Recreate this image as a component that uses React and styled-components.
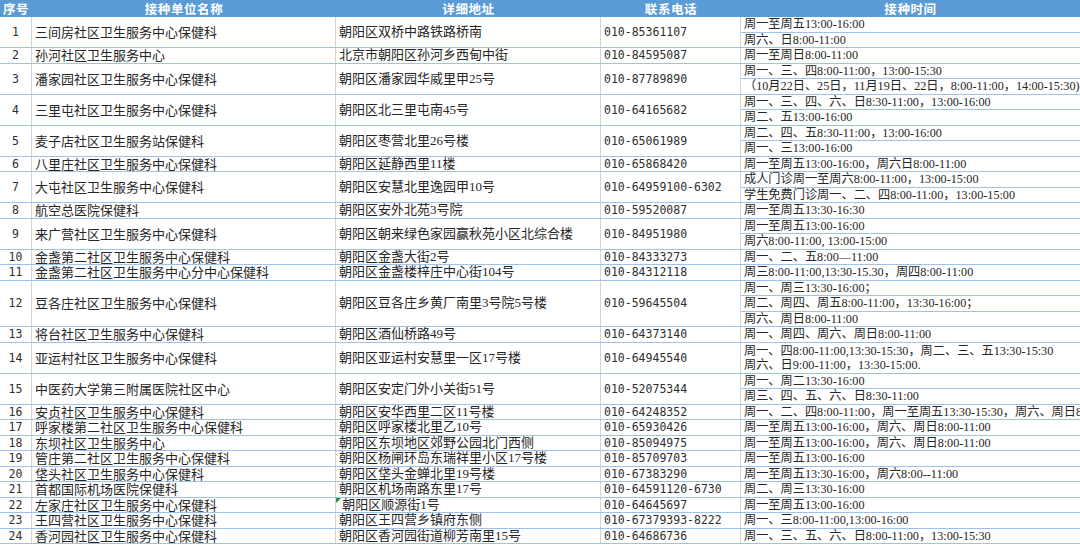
import React from 'react';
import styled, { createGlobalStyle } from 'styled-components';

const GlobalStyle = createGlobalStyle`
    * { box-sizing: border-box; }
    body {
        margin: 0;
        background: #ffffff;
        font-family: "Liberation Serif", "Noto Sans CJK SC", serif;
        color: #262626;
    }
`;

const LINE = 15.5;
const COLS = '32px 304px 265px 140px 1fr';

const Sheet = styled.div`
    width: 1080px;
    height: 547px;
    overflow: hidden;
    background: #ffffff;
`;

const HeadRow = styled.div`
    display: grid;
    grid-template-columns: ${COLS};
    height: 17px;
    background: #5b9bd5;
`;

const HeadCell = styled.div`
    display: flex;
    align-items: center;
    justify-content: center;
    color: #ffffff;
    font-family: "Noto Sans CJK SC", sans-serif;
    font-weight: 700;
    font-size: 12.5px;
    line-height: 15px;
    white-space: nowrap;
    letter-spacing: 0.6px;
`;

const Row = styled.div`
    display: grid;
    grid-template-columns: ${COLS};
    height: ${p => p.$lines * LINE}px;
    border-bottom: 1px solid #9dc3e6;
`;

const Cell = styled.div`
    position: relative;
    display: flex;
    align-items: center;
    justify-content: ${p => (p.$center ? 'center' : 'flex-start')};
    padding-left: ${p => (p.$center ? '0' : '3px')};
    border-right: 1px solid #c9d5e3;
    white-space: nowrap;
    overflow: hidden;
    line-height: 14px;
    font-family: ${p => p.$mono
        ? '"DejaVu Sans Mono", "Noto Sans CJK SC", monospace'
        : '"Liberation Serif", "Noto Sans CJK SC", serif'};
    font-size: ${p => (p.$mono ? '11.5px' : '13px')};
    color: ${p => (p.$mono ? '#2e2e2e' : '#262626')};
`;

const NameText = styled.span`
    font-family: "Noto Sans CJK SC", sans-serif;
    font-size: 13px;
    line-height: 14px;
`;

const TextFlag = styled.span`
    position: absolute;
    top: 0;
    left: 0;
    width: 0;
    height: 0;
    border-top: 5px solid #2e8b3a;
    border-right: 5px solid transparent;
`;

const TimeCell = styled.div`
    display: flex;
    flex-direction: column;
    overflow: hidden;
`;

const TimeLine = styled.div`
    flex: ${p => p.$span || 1};
    display: flex;
    flex-direction: column;
    justify-content: center;
    align-items: flex-start;
    padding-left: 3px;
    white-space: nowrap;
    font-size: 12.2px;
    line-height: 14px;
    border-bottom: 1px solid #9dc3e6;
    &:last-child { border-bottom: none; }
`;

const rows = [
    [1, '三间房社区卫生服务中心保健科', '朝阳区双桥中路铁路桥南', '010-85361107', ['周一至周五13:00-16:00', '周六、日8:00-11:00']],
    [2, '孙河社区卫生服务中心', '北京市朝阳区孙河乡西甸中街', '010-84595087', ['周一至周日8:00-11:00']],
    [3, '潘家园社区卫生服务中心保健科', '朝阳区潘家园华威里甲25号', '010-87789890', ['周一、三、四8:00-11:00，13:00-15:30', '（10月22日、25日，11月19日、22日，8:00-11:00，14:00-15:30)']],
    [4, '三里屯社区卫生服务中心保健科', '朝阳区北三里屯南45号', '010-64165682', ['周一、三、四、六、日8:30-11:00，13:00-16:00', '周二、五13:00-16:00']],
    [5, '麦子店社区卫生服务站保健科', '朝阳区枣营北里26号楼', '010-65061989', ['周二、四、五8:30-11:00，13:00-16:00', '周一、三13:00-16:00']],
    [6, '八里庄社区卫生服务中心保健科', '朝阳区延静西里11楼', '010-65868420', ['周一至周五13:00-16:00，周六日8:00-11:00']],
    [7, '大屯社区卫生服务中心保健科', '朝阳区安慧北里逸园甲10号', '010-64959100-6302', ['成人门诊周一至周六8:00-11:00，13:00-15:00', '学生免费门诊周一、二、四8:00-11:00，13:00-15:00']],
    [8, '航空总医院保健科', '朝阳区安外北苑3号院', '010-59520087', ['周一至周五13:30-16:30']],
    [9, '来广营社区卫生服务中心保健科', '朝阳区朝来绿色家园赢秋苑小区北综合楼', '010-84951980', ['周一至周五13:00-16:00', '周六8:00-11:00, 13:00-15:00']],
    [10, '金盏第二社区卫生服务中心保健科', '朝阳区金盏大街2号', '010-84333273', ['周一、二、五8:00—11:00']],
    [11, '金盏第二社区卫生服务中心分中心保健科', '朝阳区金盏楼梓庄中心街104号', '010-84312118', ['周三8:00-11:00,13:30-15.30，周四8:00-11:00']],
    [12, '豆各庄社区卫生服务中心保健科', '朝阳区豆各庄乡黄厂南里3号院5号楼', '010-59645504', ['周一、周三13:30-16:00；', '周二、周四、周五8:00-11:00，13:30-16:00；', '周六、周日8:00-11:00']],
    [13, '将台社区卫生服务中心保健科', '朝阳区酒仙桥路49号', '010-64373140', ['周一、周四、周六、周日8:00-11:00']],
    [14, '亚运村社区卫生服务中心保健科', '朝阳区亚运村安慧里一区17号楼', '010-64945540', [['周一、四8:00-11:00,13:30-15:30，周二、三、五13:30-15:30', '周六、日9:00-11:00，13:30-15:00.']]],
    [15, '中医药大学第三附属医院社区中心', '朝阳区安定门外小关街51号', '010-52075344', ['周一、周二13:30-16:00', '周三、四、五、六、日8:30-11:00']],
    [16, '安贞社区卫生服务中心保健科', '朝阳区安华西里二区11号楼', '010-64248352', ['周一、二、四8:00-11:00，周一至周五13:30-15:30，周六、周日8:00-11:00']],
    [17, '呼家楼第二社区卫生服务中心保健科', '朝阳区呼家楼北里乙10号', '010-65930426', ['周一至周五13:00-16:00，周六、周日8:00-11:00']],
    [18, '东坝社区卫生服务中心', '朝阳区东坝地区郊野公园北门西侧', '010-85094975', ['周一至周五13:00-16:00，周六、周日8:00-11:00']],
    [19, '管庄第二社区卫生服务中心保健科', '朝阳区杨闸环岛东瑞祥里小区17号楼', '010-85709703', ['周一至周五13:00-16:00']],
    [20, '垡头社区卫生服务中心保健科', '朝阳区垡头金蝉北里19号楼', '010-67383290', ['周一至周五13:30-16:00，周六8:00--11:00']],
    [21, '首都国际机场医院保健科', '朝阳区机场南路东里17号', '010-64591120-6730', ['周二、周三13:30-16:00']],
    [22, '左家庄社区卫生服务中心保健科', '\u00a0朝阳区顺源街1号', '010-64645697', ['周一至周五13:00-16:00']],
    [23, '王四营社区卫生服务中心保健科', '朝阳区王四营乡镇府东侧', '010-67379393-8222', ['周一、三8:00-11:00,13:00-16:00']],
    [24, '香河园社区卫生服务中心保健科', '朝阳区香河园街道柳芳南里15号', '010-64686736', ['周一、三、五、六、日8:00-11:00，13:00-15:30']],
];

const lineCount = times =>
    times.reduce((n, t) => n + (Array.isArray(t) ? t.length : 1), 0);

export default function App() {
    return (
        <Sheet>
            <GlobalStyle />
            <HeadRow>
                <HeadCell>序号</HeadCell>
                <HeadCell>接种单位名称</HeadCell>
                <HeadCell>详细地址</HeadCell>
                <HeadCell>联系电话</HeadCell>
                <HeadCell>接种时间</HeadCell>
            </HeadRow>
            {rows.map(([no, name, addr, phone, times]) => (
                <Row key={no} $lines={lineCount(times)}>
                    <Cell $center $mono>{no}</Cell>
                    <Cell><NameText>{name}</NameText></Cell>
                    <Cell>
                        {no === 22 && <TextFlag />}
                        {addr}
                    </Cell>
                    <Cell $mono>{phone}</Cell>
                    <TimeCell>
                        {times.map((t, i) =>
                            Array.isArray(t) ? (
                                <TimeLine key={i} $span={t.length}>
                                    {t.map(s => <span key={s}>{s}</span>)}
                                </TimeLine>
                            ) : (
                                <TimeLine key={i}>{t}</TimeLine>
                            )
                        )}
                    </TimeCell>
                </Row>
            ))}
        </Sheet>
    );
}
